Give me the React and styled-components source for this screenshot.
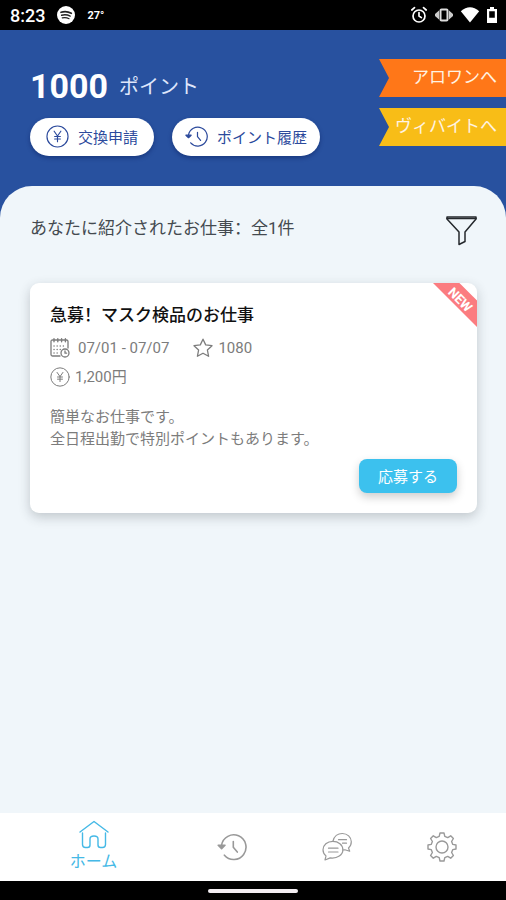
import React from "react";
import styled, { createGlobalStyle } from "styled-components";

const GlobalStyle = createGlobalStyle`
  * {
    box-sizing: border-box;
  }
  body {
    margin: 0;
    font-family: Roboto, "Noto Sans CJK SC", sans-serif;
    background: #28519f;
  }
  button {
    font-family: inherit;
    border: none;
    margin: 0;
    cursor: pointer;
  }
  h1, h2, p {
    margin: 0;
  }
  svg {
    display: block;
    flex-shrink: 0;
  }
`;

const Screen = styled.div`
  display: flex;
  flex-direction: column;
  min-height: 100vh;
  background: #28519f;
`;

const StatusBar = styled.div`
  display: flex;
  align-items: center;
  justify-content: space-between;
  height: 30px;
  padding: 0 8px 0 10px;
  background: #000;
  color: #fff;
`;

const StatusGroup = styled.div`
  display: flex;
  align-items: center;
  gap: ${props => props.$gap};
`;

const Clock = styled.span`
  font-size: 18px;
  font-weight: 500;
`;

const Temperature = styled.span`
  font-size: 11px;
  font-weight: 700;
`;

const Header = styled.header`
  display: flex;
  justify-content: space-between;
  padding: 36px 0 30px 30px;
`;

const Points = styled.h1`
  display: flex;
  align-items: center;
  gap: 11px;
  height: 40px;
  color: #fff;
  font-size: 34px;
  font-weight: 700;
`;

const PointsUnit = styled.span`
  padding-bottom: 2px;
  color: #dfe6fb;
  font-size: 20px;
  font-weight: 400;
`;

const PillRow = styled.div`
  display: flex;
  gap: 18px;
  margin-top: 12px;
`;

const Pill = styled.button`
  display: flex;
  align-items: center;
  gap: 9px;
  height: 38px;
  padding: 0 ${props => (props.$wide ? "13px" : "16px")} 2px;
  border-radius: 19px;
  background: #fff;
  color: #2c4a9c;
  font-size: 15px;
  white-space: nowrap;
  box-shadow: 0 2px 4px rgba(0, 20, 80, 0.4);
`;

const RibbonList = styled.nav`
  display: flex;
  flex-direction: column;
  gap: 11px;
  width: 127px;
  margin-top: -7px;
`;

const Ribbon = styled.a`
  height: 38px;
  padding-right: 9px;
  background: ${props => props.$color};
  clip-path: polygon(0 0, 100% 0, 100% 100%, 0 100%, 10px 50%);
  color: #fff3e2;
  font-size: 17px;
  line-height: 36px;
  text-align: right;
  text-decoration: none;
  white-space: nowrap;
`;

const Sheet = styled.main`
  flex: 1;
  padding: 29px 29px 30px 30px;
  border-radius: 32px 32px 0 0;
  background: #f0f6fa;
`;

const ListHead = styled.div`
  display: flex;
  align-items: flex-start;
  justify-content: space-between;
  margin-bottom: 36px;
`;

const ListTitle = styled.h2`
  color: #444a50;
  font-size: 17px;
  font-weight: 400;
  line-height: 26px;
`;

const FilterButton = styled.button`
  padding: 0;
  background: none;
  color: #24282c;
`;

const Card = styled.article`
  position: relative;
  padding: 20px;
  border-radius: 9px;
  background: #fff;
  box-shadow: 0 4px 12px rgba(40, 50, 60, 0.24);
`;

const NewBadge = styled.span`
  position: absolute;
  top: 0;
  right: 0;
  display: flex;
  align-items: center;
  justify-content: center;
  width: 44px;
  height: 44px;
  overflow: hidden;
  border-top-right-radius: 9px;
  background: #fb7c80;
  clip-path: polygon(0 0, 60% 0, 100% 40%, 100% 100%);
`;

const NewLabel = styled.span`
  padding-bottom: 14px;
  color: #fff;
  font-size: 13px;
  font-weight: 700;
  line-height: 14px;
  transform: rotate(45deg);
`;

const CardTitle = styled.h2`
  color: #111;
  font-size: 17px;
  font-weight: 500;
  line-height: 24px;
`;

const MetaList = styled.div`
  display: flex;
  flex-direction: column;
  gap: 9px;
  margin-top: 11px;
`;

const MetaRow = styled.div`
  display: flex;
  gap: 24px;
`;

const Meta = styled.span`
  display: flex;
  align-items: center;
  gap: ${props => props.$gap || "5px"};
  height: 20px;
  color: #7c7c7c;
  font-size: 15px;
  line-height: 20px;
`;

const Description = styled.p`
  margin-top: 19px;
  color: #7c7c7c;
  font-size: 15px;
  line-height: 22px;
`;

const ApplyButton = styled.button`
  display: block;
  height: 34px;
  margin: 9px 0 0 auto;
  padding: 0 19px 2px;
  border-radius: 8px;
  background: #3cc1ee;
  color: #fff;
  font-size: 15px;
  box-shadow: 0 4px 10px rgba(0, 0, 0, 0.2);
`;

const TabBar = styled.nav`
  display: flex;
  height: 68px;
  padding: 0 12px 0 8px;
  background: #fff;
`;

const Tab = styled.button`
  display: flex;
  flex: ${props => (props.$active ? 171 : 105)} 1 0;
  flex-direction: column;
  align-items: center;
  justify-content: center;
  gap: 1px;
  padding: 0 0 1px;
  background: none;
  color: ${props => (props.$active ? "#45b9e6" : "#999")};
  font-size: 16px;
  line-height: 22px;
`;

const SystemBar = styled.div`
  display: flex;
  align-items: center;
  justify-content: center;
  height: 19px;
  background: #000;
`;

const HomeIndicator = styled.div`
  width: 90px;
  height: 4px;
  border-radius: 2px;
  background: #f3eef2;
`;

const Stroke = ({ size, box = 24, width = 1, children }) => (
  <svg
    width={size}
    height={size}
    viewBox={`0 0 ${box} ${box}`}
    fill="none"
    stroke="currentColor"
    strokeWidth={width}
    strokeLinecap="round"
    strokeLinejoin="round"
    aria-hidden="true"
  >
    {children}
  </svg>
);

const YenIcon = ({ size }) => (
  <Stroke size={size} width={1.2}>
    <circle cx="12" cy="12" r="11" />
    <path d="M8.5 6.5 12 11.5l3.5-5M12 11.5V17.5M9 12h6M9 14.6h6" />
  </Stroke>
);

const HistoryIcon = ({ size, width }) => (
  <Stroke size={size} box={30} width={width}>
    <path d="M4.6 13A12.300 12.300 0 1 1 7.400 23.200" />
    <path d="M1.200 13.300h6.800L4.600 16.600Z" fill="currentColor" />
    <path d="M16.300 9.500v5.800l4 4.800" />
  </Stroke>
);

const FilterIcon = () => (
  <Stroke size={32} box={32} width={1.5}>
    <path d="M2 2h29v2L20 17v9.500L14 29.500V17L2 4Z" />
    <path d="M2 3.500h29" />
  </Stroke>
);

const CalendarIcon = () => (
  <Stroke size={20} box={20} width={1.3}>
    <path d="M18 10V3.5Q18 2 16.5 2H2.500Q1 2 1 3.500V16.500Q1 18 2.500 18H10" />
    <path d="M4 .7v3M7.800 .7v3M11.600 .7v3M15.400 .7v3" strokeWidth="1.4" />
    <path d="M4 8h11M4 11.500h7M4 15h5" strokeDasharray=".1 3" strokeWidth="1.4" />
    <circle cx="15" cy="15" r="4" />
    <path d="M15 13v2.200h1.600" />
  </Stroke>
);

const StarIcon = () => (
  <Stroke size={20} box={20} width={1.3}>
    <path d="m10 1.200 2.700 5.700 6.300.8-4.600 4.300 1.200 6.300L10 15.200l-5.600 3.100L5.600 12 1 7.700l6.300-.8Z" />
  </Stroke>
);

const HomeIcon = () => (
  <Stroke size={30} box={30} width={1.4}>
    <path d="M1 12 15 1.500 29 12" />
    <path d="M3.500 13v11.500Q3.500 27.500 6.500 27.500H8.500Q11 27.500 11 25V19Q11 16 15 16t4 3V25Q19 27.500 21.500 27.500H23.500Q26.500 27.500 26.500 24.500V13" />
  </Stroke>
);

const ChatIcon = () => (
  <Stroke size={30} box={30} width={1.2}>
    <path d="M11 9.200C12 4.500 15.800 1.500 20.300 1.500c5 0 9 3.700 9 8.300 0 2.800-1 4.800-2.800 6.200l1.200 3.300-4.800-1.500-2.300.2" />
    <path d="M10.800 9.400C5.300 9.400 1 13 1 17.800c0 2.500 1.200 4.700 3 6.100L3 28l5.200-2.100c7.300.9 12.700-3 12.700-8.100s-4.600-8.400-10.100-8.400Z" />
    <path d="M16.500 7.700h8M20.500 11.200h4M6.500 16.200h9.500M6.500 20h9.500" />
  </Stroke>
);

const GearIcon = () => (
  <Stroke size={30} box={30} width={1.4}>
    <path d="M13 1h4l.8 3.400 2.900 1.200 3-1.800 2.700 2.700-1.800 3 1.200 2.900L29 13v4l-3.200.6-1.200 2.900 1.800 3-2.700 2.700-3-1.800-2.900 1.200L17 29h-4l-.8-3.400-2.900-1.200-3 1.800-2.700-2.700 1.800-3-1.200-2.900L1 17v-4l3.200-.6 1.200-2.900-1.800-3 2.700-2.700 3 1.800 2.900-1.200Z" />
    <circle cx="15" cy="15" r="6" />
  </Stroke>
);

const MusicIcon = () => (
  <svg width="18" height="18" viewBox="0 0 18 18" aria-hidden="true">
    <circle cx="9" cy="9" r="9" fill="#fff" />
    <g fill="none" stroke="#222" strokeLinecap="round">
      <path d="M4 6.300q5.500-1.600 10.300 1" strokeWidth="1.7" />
      <path d="M4.600 9.200q4.600-1.200 8.600.9" strokeWidth="1.4" />
      <path d="M5.200 11.900q3.800-.9 6.900.8" strokeWidth="1.1" />
    </g>
  </svg>
);

const AlarmIcon = () => (
  <Stroke size={18} box={18} width={1.7}>
    <circle cx="9" cy="10" r="6" />
    <path d="M9 6.500V10l2.400 1.600M1.800 4l2.700-2.400M16.200 4l-2.700-2.400" />
  </Stroke>
);

const VibrateIcon = () => (
  <svg width="20" height="18" viewBox="0 0 20 18" aria-hidden="true">
    <rect x="6.500" y="3.500" width="7" height="11" rx="1" fill="none" stroke="#ddd" strokeWidth="2" />
    <path d="M5 4.500v9L1 10V8ZM15 4.500v9L19 10V8Z" fill="#ccc" />
  </svg>
);

const WifiIcon = () => (
  <svg width="20" height="18" viewBox="0 0 20 18" aria-hidden="true">
    <path d="M.8 5.200Q10-2.600 19.200 5.200L10 16.500Z" fill="#fff" />
  </svg>
);

const BatteryIcon = () => (
  <svg width="12" height="18" viewBox="0 0 12 18" aria-hidden="true">
    <path d="M4 1h4v2h3v14H1V3h3ZM3.200 5.200v6.600h5.600V5.200Z" fill="#fff" fillRule="evenodd" />
  </svg>
);

const JobCard = ({ job }) => (
  <Card>
    <NewBadge>
      <NewLabel>NEW</NewLabel>
    </NewBadge>
    <CardTitle>{job.title}</CardTitle>
    <MetaList>
      <MetaRow>
        <Meta $gap="8px">
          <CalendarIcon />
          {job.period}
        </Meta>
        <Meta>
          <StarIcon />
          {job.points}
        </Meta>
      </MetaRow>
      <MetaRow>
        <Meta>
          <YenIcon size={20} />
          {job.wage}
        </Meta>
      </MetaRow>
    </MetaList>
    <Description>
      簡単なお仕事です。
      <br />
      全日程出勤で特別ポイントもあります。
    </Description>
    <ApplyButton type="button">応募する</ApplyButton>
  </Card>
);

const job = {
  title: "急募！マスク検品のお仕事",
  period: "07/01 - 07/07",
  points: "1080",
  wage: "1,200円"
};

const App = () => (
  <Screen>
    <GlobalStyle />
    <StatusBar>
      <StatusGroup $gap="12px">
        <Clock>8:23</Clock>
        <MusicIcon />
        <Temperature>27°</Temperature>
      </StatusGroup>
      <StatusGroup $gap="6px">
        <AlarmIcon />
        <VibrateIcon />
        <WifiIcon />
        <BatteryIcon />
      </StatusGroup>
    </StatusBar>
    <Header>
      <div>
        <Points>
          1000 <PointsUnit>ポイント</PointsUnit>
        </Points>
        <PillRow>
          <Pill type="button">
            <YenIcon size={23} />
            交換申請
          </Pill>
          <Pill type="button" $wide>
            <HistoryIcon size={23} width={1.6} />
            ポイント履歴
          </Pill>
        </PillRow>
      </div>
      <RibbonList>
        <Ribbon href="#arowan" $color="#ff7718">
          アロワンへ
        </Ribbon>
        <Ribbon href="#vibeit" $color="#f8bd17">
          ヴィバイトへ
        </Ribbon>
      </RibbonList>
    </Header>
    <Sheet>
      <ListHead>
        <ListTitle>あなたに紹介されたお仕事：全1件</ListTitle>
        <FilterButton type="button" aria-label="絞り込み">
          <FilterIcon />
        </FilterButton>
      </ListHead>
      <JobCard job={job} />
    </Sheet>
    <TabBar>
      <Tab type="button" $active>
        <HomeIcon />
        ホーム
      </Tab>
      <Tab type="button" aria-label="履歴">
        <HistoryIcon size={30} width={1.6} />
      </Tab>
      <Tab type="button" aria-label="メッセージ">
        <ChatIcon />
      </Tab>
      <Tab type="button" aria-label="設定">
        <GearIcon />
      </Tab>
    </TabBar>
    <SystemBar>
      <HomeIndicator />
    </SystemBar>
  </Screen>
);

export default App;
